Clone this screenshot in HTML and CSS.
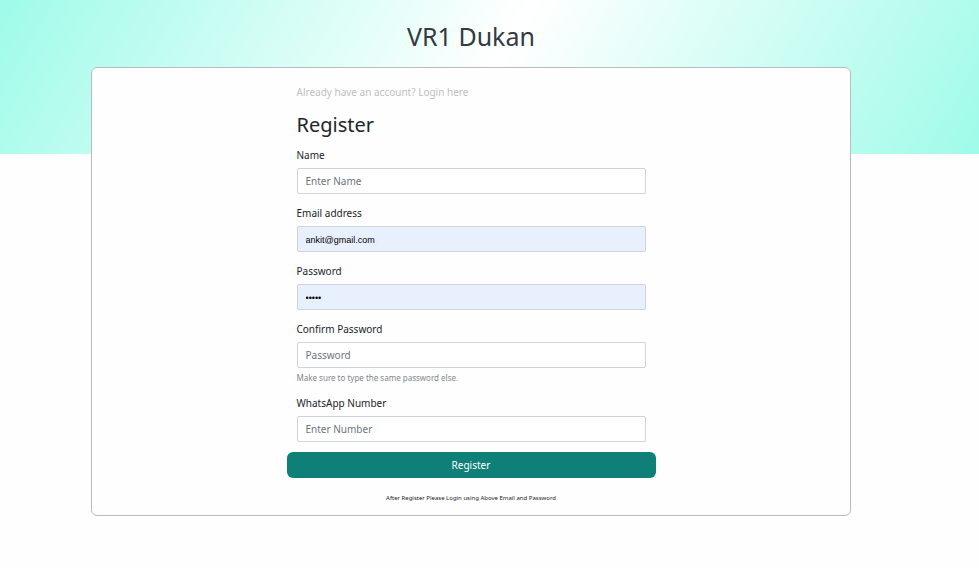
FILE: index.html
```html
<!DOCTYPE html>
<html lang="en">
<head>
<meta charset="utf-8">
<meta name="viewport" content="width=device-width, initial-scale=1">
<title>VR1 Dukan</title>
<link rel="stylesheet" href="styles.css">
</head>
<body>
<main class="page">
  <h1 class="brand">VR1 Dukan</h1>
  <section class="card">
    <form class="form">
      <a class="login-link" href="#login">Already have an account? Login here</a>
      <h2 class="heading">Register</h2>
      <div class="field">
        <label for="name">Name</label>
        <input id="name" type="text" placeholder="Enter Name">
      </div>
      <div class="field">
        <label for="email">Email address</label>
        <input id="email" class="filled" type="email" value="ankit@gmail.com">
      </div>
      <div class="field">
        <label for="password">Password</label>
        <input id="password" class="filled" type="password" value="ankit">
      </div>
      <div class="field">
        <label for="confirm">Confirm Password</label>
        <input id="confirm" type="password" placeholder="Password" aria-describedby="confirm-help">
        <small id="confirm-help" class="help">Make sure to type the same password else.</small>
      </div>
      <div class="field">
        <label for="whatsapp">WhatsApp Number</label>
        <input id="whatsapp" type="tel" placeholder="Enter Number">
      </div>
      <button class="submit" type="submit">Register</button>
      <p class="note">After Register Please Login using Above Email and Password</p>
    </form>
  </section>
</main>
</body>
</html>
```
FILE: styles.css
```css
* {
  box-sizing: border-box;
}

body {
  margin: 0;
  background: #fefefe linear-gradient(120deg, #9ffbe9, #ffffff 50%, #9ffbe9) top / 100% 154px no-repeat;
  color: #212529;
  font-family: "Noto Sans", "Open Sans", sans-serif;
  font-size: 10px;
  line-height: 16px;
}

.page {
  display: flex;
  flex-direction: column;
  align-items: center;
  padding: 20px 37px 52px 0;
}

.brand {
  margin: 0 0 15px;
  color: #343a40;
  font-size: 25px;
  font-weight: 400;
  line-height: 32px;
}

.card {
  width: 81%;
  max-width: 760px;
  padding: 16px 16px 11px;
  border: 1px solid #b9bcbe;
  border-radius: 6px;
  background: #fefefe;
}

.form {
  display: flex;
  flex-direction: column;
  max-width: 349px;
  margin: 0 auto;
}

.login-link {
  color: #bdbfc1;
  text-decoration: none;
}

.heading {
  margin: 12px 0 9px;
  font-size: 20px;
  font-weight: 400;
  line-height: 26px;
}

.field {
  display: flex;
  flex-direction: column;
  margin-bottom: 11px;
}

.field:last-of-type {
  margin-bottom: 10px;
}

label {
  margin-bottom: 5px;
}

input {
  width: 100%;
  height: 26px;
  padding: 0 8px;
  border: 1px solid #ced4da;
  border-radius: 2px;
  background: #fff;
  color: #212529;
  font: inherit;
}

input::placeholder {
  color: #6c757d;
}

.filled {
  padding-top: 1px;
  background: #e8f0fe;
  color: #000;
  font-family: "Liberation Sans", Arial, sans-serif;
  font-size: 9px;
}

.help {
  margin-top: 4px;
  color: #808890;
  font-size: 8px;
  line-height: 12px;
}

.submit {
  height: 26px;
  margin: 0 -10px;
  border: 0;
  border-radius: 6px;
  background: #0f8078;
  color: #fff;
  font: inherit;
}

.note {
  margin: 14px 0 0;
  font-size: 6px;
  line-height: 12px;
  text-align: center;
}
```
